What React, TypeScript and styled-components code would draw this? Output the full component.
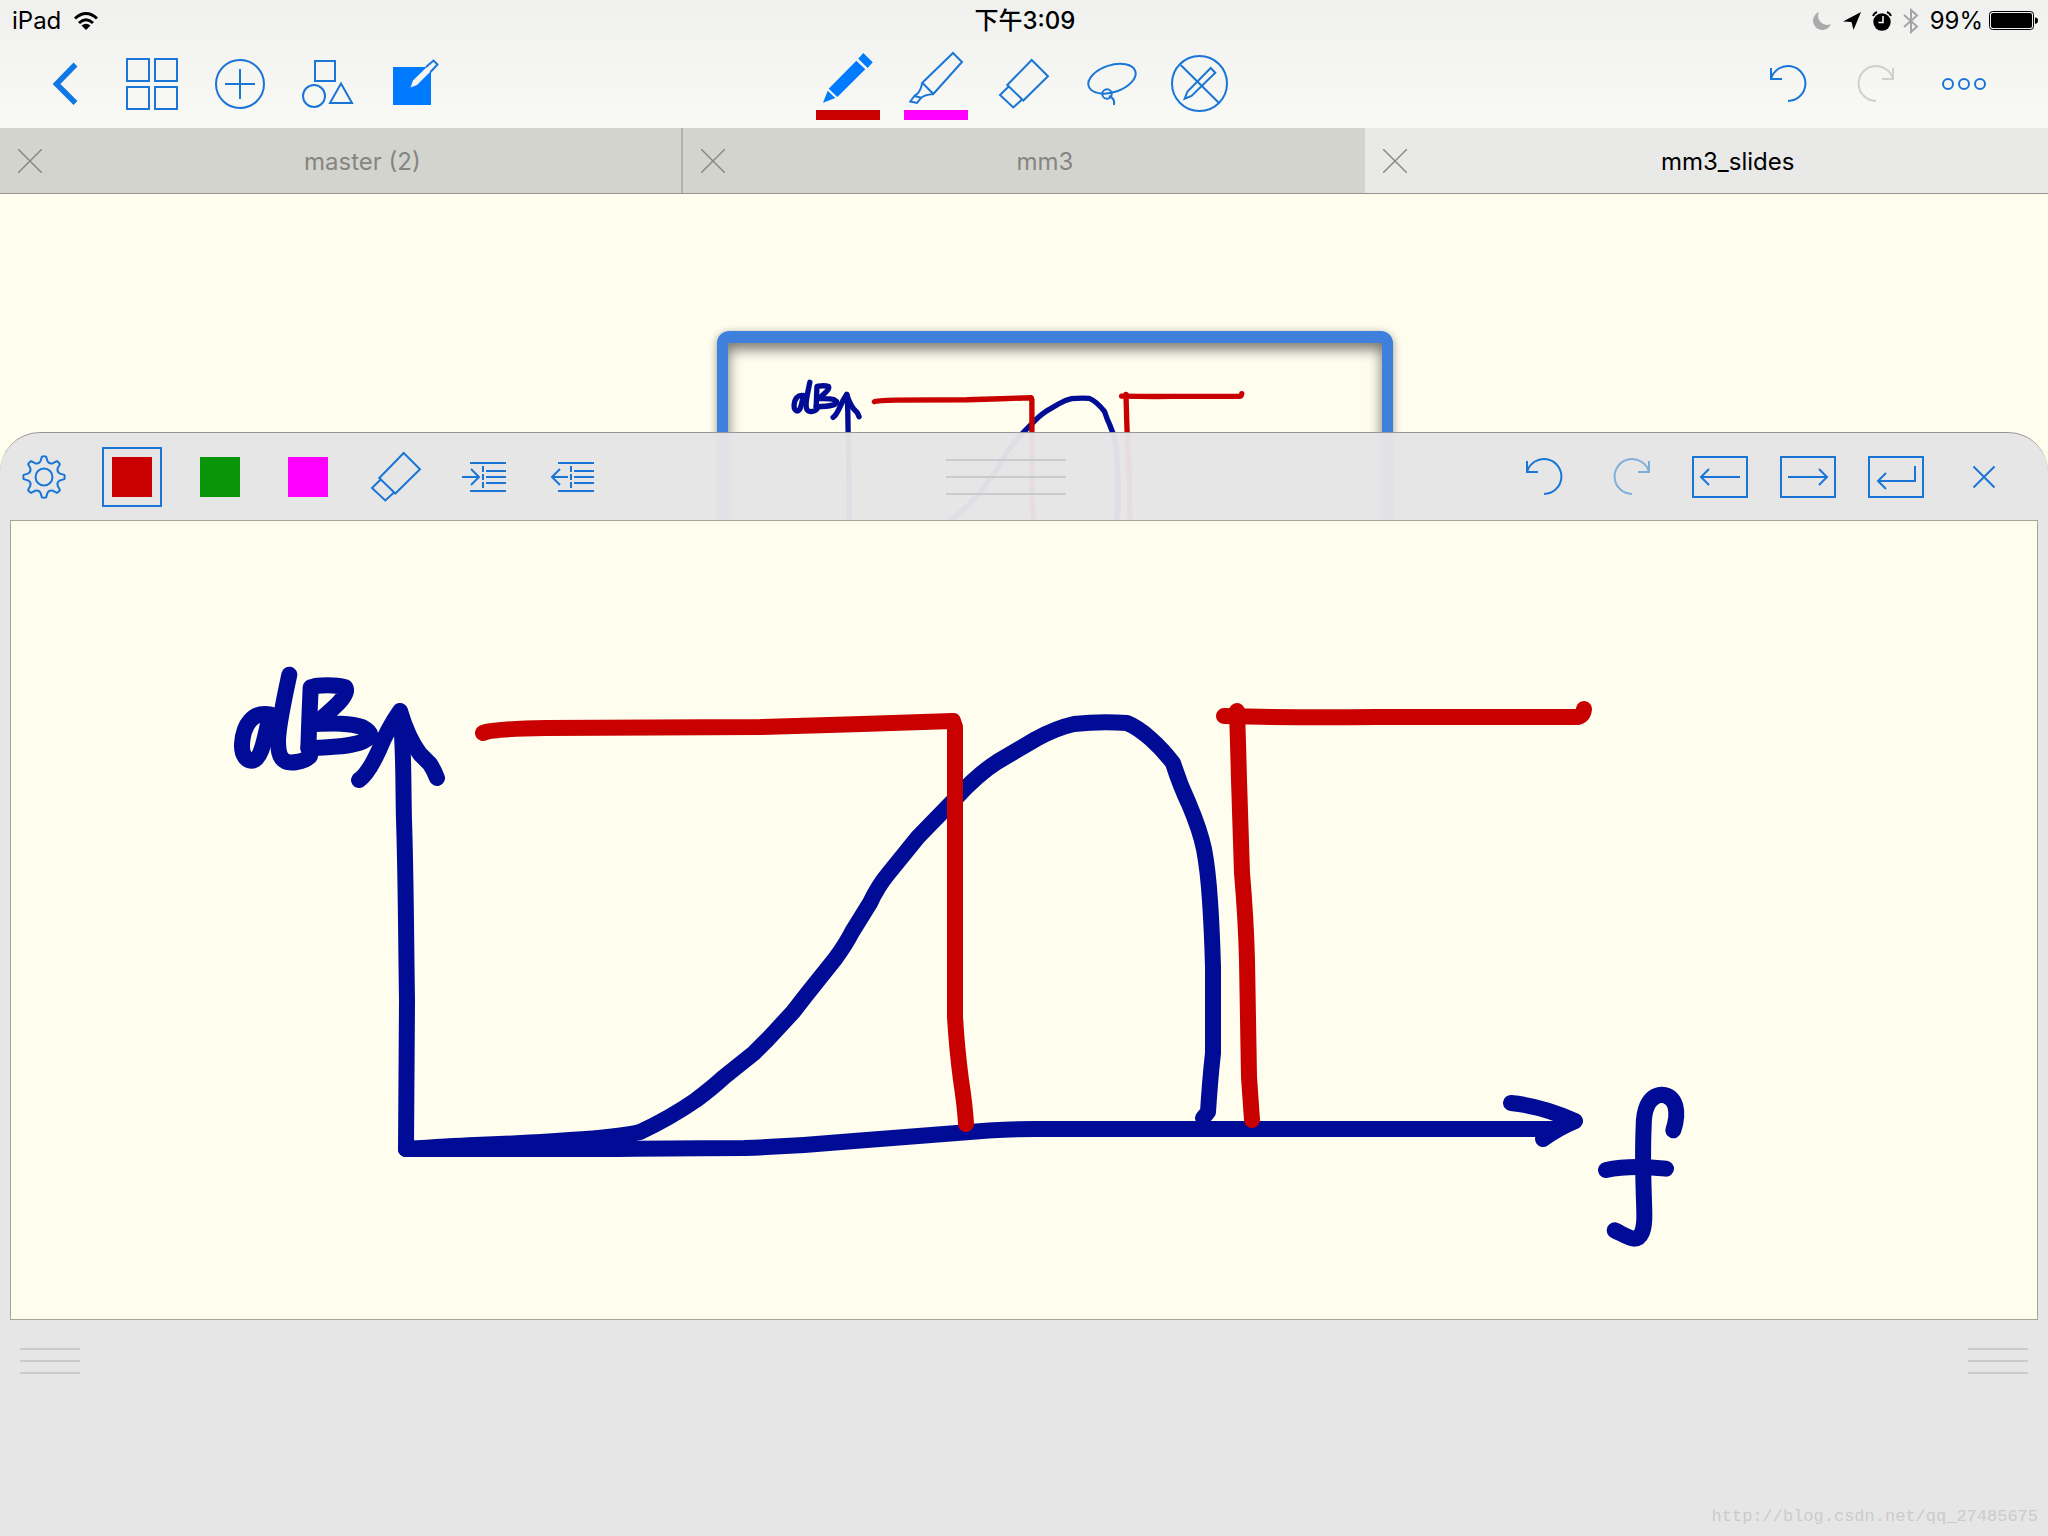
import React from 'react';
import styled, { createGlobalStyle } from 'styled-components';

const BLUE = '#1a76d6';
const SOLID_BLUE = '#007aff';
const RED = '#c80000';
const GREEN = '#089608';
const MAGENTA = '#ff00ff';
const INK = '#000c96';
const PAPER = '#fffdee';

const GlobalStyle = createGlobalStyle`
  * { box-sizing: border-box; }
  body {
    margin: 0;
    background: ${PAPER};
    font-family: Inter, "Liberation Sans", "Noto Sans CJK SC", sans-serif;
    font-size: 24px;
    line-height: 32px;
    color: #000;
  }
`;

const Page = styled.div`
  display: flex;
  flex-direction: column;
  min-height: 100vh;
  overflow: hidden;
`;

const TopBar = styled.header`
  background: linear-gradient(#f0f0ef, #f9f9f5);
`;

const StatusBar = styled.div`
  display: grid;
  grid-template-columns: 1fr auto 1fr;
  align-items: center;
  height: 40px;
  padding: 2px 10px 0 12px;
`;

const StatusGroup = styled.div<{ $end?: boolean }>`
  display: flex;
  align-items: center;
  justify-content: ${p => (p.$end ? 'flex-end' : 'flex-start')};
  gap: ${p => (p.$end ? 11 : 12)}px;
`;

const Battery = styled.span`
  display: flex;
  align-items: center;
  gap: 6px;
`;

const Clock = styled.time`
  font-weight: 500;
`;

const Toolbar = styled.div`
  display: grid;
  grid-template-columns: 1fr auto 1fr;
  height: 88px;
`;

const ToolGroup = styled.div<{ $end?: boolean; $left?: number; $right?: number }>`
  display: flex;
  justify-content: ${p => (p.$end ? 'flex-end' : 'flex-start')};
  padding-left: ${p => p.$left ?? 0}px;
  padding-right: ${p => p.$right ?? 0}px;
`;

const ToolButton = styled.button`
  position: relative;
  display: flex;
  align-items: center;
  justify-content: center;
  flex: none;
  width: 88px;
  height: 88px;
  padding: 0;
  border: 0;
  background: none;
  color: ${BLUE};
  cursor: pointer;
`;

const ColorBar = styled.span<{ $color: string }>`
  position: absolute;
  left: 12px;
  right: 12px;
  bottom: 8px;
  height: 10px;
  background: ${p => p.$color};
`;

const TabStrip = styled.div`
  display: flex;
  height: 66px;
  border-bottom: 1px solid #96968f;
`;

const Tab = styled.div<{ $active?: boolean; $divider?: boolean }>`
  display: flex;
  align-items: center;
  flex: 1;
  padding-left: 18px;
  background: ${p => (p.$active ? '#e9e9e8' : '#d4d4cf')};
  box-shadow: ${p => (p.$divider ? 'inset -2px 0 #b2b2ae' : 'none')};
`;

const CloseButton = styled.button`
  display: flex;
  width: 24px;
  height: 24px;
  padding: 0;
  border: 0;
  background: none;
  color: #858582;
  cursor: pointer;
`;

const TabTitle = styled.button<{ $active?: boolean }>`
  flex: 1;
  height: 100%;
  padding: 2px 0 0;
  border: 0;
  background: none;
  font: inherit;
  text-align: center;
  color: ${p => (p.$active ? '#000' : '#858582')};
  cursor: pointer;
`;

const Workspace = styled.main`
  position: relative;
  display: flex;
  flex: 1;
  flex-direction: column;
  background: ${PAPER};
`;

/* The zoom frame marks the part of the page that the panel below enlarges. */
const ZoomFrame = styled.div`
  position: absolute;
  top: 137px;
  left: 35%;
  width: 33%;

  &::after {
    content: '';
    position: absolute;
    inset: 0;
    border: solid #3f80dc;
    border-width: 12px 11px;
    border-radius: 12px;
    box-shadow: 0 2px 8px rgba(0, 0, 0, 0.4), inset 0 6px 14px rgba(0, 0, 0, 0.55);
  }
`;

const InkSvg = styled.svg`
  display: block;
  width: 100%;
  height: auto;
`;

const ZoomPanel = styled.section`
  position: relative;
  display: flex;
  flex: 1;
  flex-direction: column;
  margin-top: 238px;
  border-top: 1px solid #96969a;
  border-radius: 40px 40px 0 0;
  background: rgba(229, 229, 230, 0.97);
`;

const PanelHeader = styled.div`
  display: grid;
  grid-template-columns: 1fr auto 1fr;
  align-items: center;
  height: 87px;
  padding-bottom: 1px;
`;

const Swatch = styled.span<{ $color: string; $selected?: boolean }>`
  width: 60px;
  height: 60px;
  padding: 8px;
  border: 2px solid ${p => (p.$selected ? BLUE : 'transparent')};
  background: ${p => p.$color} content-box;
`;

const Grip = styled.button<{ $large?: boolean }>`
  display: flex;
  flex-direction: column;
  gap: ${p => (p.$large ? 15 : 10)}px;
  width: ${p => (p.$large ? 120 : 60)}px;
  margin-right: ${p => (p.$large ? 36 : 0)}px;
  padding: 0;
  border: 0;
  background: none;
  cursor: grab;
`;

const GripLine = styled.span`
  width: 100%;
  height: 2px;
  background: #cbcbcc;
`;

const WritingArea = styled.div`
  margin: 0 10px;
  border: 1px solid #a5a59f;
  background: ${PAPER};
`;

const PanelFooter = styled.footer`
  display: flex;
  flex: 1;
  flex-direction: column;
  justify-content: space-between;
  padding-top: 28px;
`;

const GripRow = styled.div`
  display: flex;
  justify-content: space-between;
  padding: 0 20px;
`;

const Watermark = styled.p`
  margin: 0;
  padding: 0 10px 3px;
  font-family: "Liberation Mono", monospace;
  font-size: 17px;
  line-height: 32px;
  text-align: right;
  color: #cbcbcb;
`;

type IconProps = { children: React.ReactNode; color?: string };

const Icon = ({ children, color = 'currentColor' }: IconProps) => (
  <svg width="88" height="88" viewBox="0 0 88 88" fill="none" stroke={color} strokeWidth="2" aria-hidden="true">
    {children}
  </svg>
);

const Cross = () => (
  <svg width="24" height="24" viewBox="0 0 24 24" stroke="currentColor" strokeWidth="1.4" aria-hidden="true">
    <path d="M0 0 24 24M24 0 0 24" />
  </svg>
);

const EraserIcon = () => (
  <Icon>
    <path d="M51.7 20 68 36.3 43.3 60.5 27.3 45Z" />
    <path d="M28.7 46.5 20 55 33.3 67.5 42 59.5" />
  </Icon>
);

const UndoIcon = () => (
  <Icon>
    <path d="M27 39A17.5 17.5 0 1 1 44 61M27 28V39H38" />
  </Icon>
);

const RedoIcon = ({ color }: { color: string }) => (
  <Icon color={color}>
    <path d="M61 39A17.5 17.5 0 1 0 44 61M61 28V39H50" />
  </Icon>
);

const polar = (radius: number, degrees: number) => {
  const a = (degrees * Math.PI) / 180;
  return `${(44 + radius * Math.sin(a)).toFixed(1)} ${(44 - radius * Math.cos(a)).toFixed(1)}`;
};

const gearPath =
  Array.from({ length: 8 }, (_, i) => {
    const a = i * 45;
    return `${i ? 'L' : 'M'}${polar(16.5, a - 12)}L${polar(20.5, a - 6)}Q${polar(21, a)} ${polar(20.5, a + 6)}L${polar(16.5, a + 12)}Q${polar(13.5, a + 22.5)} ${polar(16.5, a + 33)}`;
  }).join('') + 'Z';

const GearIcon = () => (
  <Icon>
    <path d={gearPath} strokeLinejoin="round" />
    <circle cx="44" cy="44" r="8.5" />
  </Icon>
);

const IndentIcon = ({ out }: { out?: boolean }) => (
  <Icon>
    <path d="M30 30H66M46 38H66M46 44H66M46 50H66M30 58H66M43 33V39M43 41V47M43 49V55" />
    <path d={out ? 'M40 44H24M32 36 24 44 32 52' : 'M22 44H39M31 36 39 44 31 52'} />
  </Icon>
);

const BoxedIcon = ({ d }: { d: string }) => (
  <Icon>
    <rect x="17" y="24" width="54" height="40" />
    <path d={d} />
  </Icon>
);

/* Pen strokes of the note, in page coordinates. */
const Strokes = ({ label }: { label: string }) => (
  <InkSvg viewBox="0 0 2026 798" role="img" aria-label={label}>
    <g transform="translate(-11 -521)" fill="none" strokeWidth="16" strokeLinecap="round" strokeLinejoin="round">
      <g stroke={INK}>
        <path d="M400 712C404 740 403 780 404 820C406 880 406 940 407 1000L406 1149" />
        <path d="M359 780Q368 774 379 750Q388 728 400 711Q408 738 420 754L430 764Q434 770 437 778" />
        <path d="M406 1149H617Q690 1148 744 1148Q800 1146 854 1141L957 1133Q1000 1129 1036 1129H1487L1558 1129" />
        <path d="M1511 1103Q1542 1106 1575 1121Q1558 1128 1543 1139" />
        <path d="M406 1149Q450 1146 475 1145Q530 1143 570 1140Q620 1137 640 1132Q670 1118 696 1100Q712 1088 724 1077L754 1053L767 1040L793 1012L807 994L835 959Q846 944 852 932L870 903Q878 886 888 874L918 837L955 799Q978 774 997 762L1036 739Q1056 728 1074 724Q1100 721 1127 723C1142 729 1160 746 1173 763Q1180 785 1189 804Q1200 830 1204 849Q1208 870 1210 901Q1212 930 1213 967V1053Q1210 1080 1208 1112L1203 1118" />
        <g transform="translate(200 640) scale(.33333)" strokeWidth="48">
          <path d="M212 224C160 212 130 252 126 312C124 348 142 364 158 362C190 355 196 270 212 224" />
          <path d="M268 104C248 200 236 250 234 300C234 350 245 374 290 366Q318 362 330 348" />
          <path d="M332 142Q328 230 325 324" />
          <path d="M345 138C380 134 420 136 436 142C448 164 410 198 345 252C400 250 450 248 488 262C515 276 520 290 490 304C450 322 390 320 325 325" />
        </g>
        <g transform="translate(1480 1060) scale(.33333)" strokeWidth="48">
          <path d="M580 211C598 156 590 108 545 104C502 108 491 156 491 200C486 310 492 400 493 460C494 510 484 536 462 536C444 534 424 520 404 511" />
          <path d="M378 330Q450 314 558 326" />
        </g>
      </g>
      <g stroke={RED}>
        <path d="M483 733Q490 729 546 728L760 727L862 724L953 721L955 727V1017Q957 1050 961 1080Q965 1106 966 1124" />
        <path d="M1224 716Q1300 718 1376 717H1574Q1583 718 1584 709" />
        <path d="M1237 711Q1238 740 1239 780L1242 873Q1246 920 1247 960L1249 1077L1252 1120" />
      </g>
    </g>
  </InkSvg>
);

const GripLines = () => (
  <>
    <GripLine />
    <GripLine />
    <GripLine />
  </>
);

const tabs = ['master (2)', 'mm3', 'mm3_slides'];

export default function App() {
  const active = 'mm3_slides';
  return (
    <Page>
      <GlobalStyle />
      <TopBar>
        <StatusBar>
          <StatusGroup>
            <span>iPad</span>
            <svg width="26" height="20" viewBox="0 0 26 20" fill="none" stroke="#000" strokeWidth="3" aria-label="Wi-Fi">
              <path d="M2 7.5Q13-2.5 24 7.5M6 12Q13 5.500 20 12" />
              <path d="M8.500 14.500Q13 11 17.500 14.500L13 19Z" fill="#000" stroke="none" />
            </svg>
          </StatusGroup>
          <Clock>下午3:09</Clock>
          <StatusGroup $end>
            <svg width="20" height="20" viewBox="0 0 20 20" fill="#aaa" aria-label="Do not disturb">
              <path d="M7 1A9.300 9.300 0 1 0 19 13A9 9 0 0 1 7 1Z" />
            </svg>
            <svg width="18" height="18" viewBox="0 0 18 18" aria-label="Location">
              <path d="M18 0 0 9.500 8.500 10 10.500 18Z" />
            </svg>
            <svg width="20" height="20" viewBox="0 0 20 20" fill="none" aria-label="Alarm">
              <circle cx="10" cy="11" r="8.700" fill="#000" />
              <path d="M1 5Q2 2 5 1M15 1Q18 2 19 5" stroke="#000" strokeWidth="2" />
              <path d="M11 5V11.500H6.500" stroke="#fff" strokeWidth="1.500" />
            </svg>
            <svg width="16" height="26" viewBox="0 0 16 26" fill="none" stroke="#a5a5a5" strokeWidth="2" aria-label="Bluetooth">
              <path d="M1 7 14 18.500 8 24V2L14 7.500 1 19" />
            </svg>
            <Battery>
              <span>99%</span>
              <svg width="49" height="20" viewBox="0 0 49 20" aria-label="Battery">
                <rect x=".5" y=".5" width="44" height="18" rx="3" fill="none" stroke="#000" />
                <rect x="2" y="2" width="41" height="15" rx="2" />
                <path d="M46 6.500Q49 6.500 49 9.500T46 13Z" />
              </svg>
            </Battery>
          </StatusGroup>
        </StatusBar>
        <Toolbar>
          <ToolGroup $left={20}>
            <ToolButton aria-label="Back">
              <Icon color="#0f78e6">
                <path d="M55.500 24.500 36.500 44 55.500 63" strokeWidth="5.500" />
              </Icon>
            </ToolButton>
            <ToolButton aria-label="Pages">
              <Icon>
                <path d="M19 19H41V41H19ZM47 19H69V41H47ZM19 47H41V69H19ZM47 47H69V69H47Z" />
              </Icon>
            </ToolButton>
            <ToolButton aria-label="Add">
              <Icon>
                <circle cx="44" cy="44" r="24" />
                <path d="M29 44H59M44 29V59" />
              </Icon>
            </ToolButton>
            <ToolButton aria-label="Shapes">
              <Icon>
                <rect x="31" y="21" width="20" height="20" />
                <circle cx="30" cy="56" r="11" />
                <path d="M57 43.500 68 63H46Z" />
              </Icon>
            </ToolButton>
            <ToolButton aria-label="Zoom window">
              <Icon>
                <rect x="21" y="27" width="38" height="38" fill={SOLID_BLUE} stroke="none" />
                <path d="M38.500 47.500 41 40.500 61.500 20.500 65.500 24.500 45 45Z" fill="#f4f4f2" stroke="none" />
                <path d="M54 27 61.500 20.500 65.500 24.500 58.500 32" />
              </Icon>
            </ToolButton>
          </ToolGroup>
          <ToolGroup>
            <ToolButton aria-label="Pen">
              <Icon>
                <path
                  d="M52.300 20.700 61.300 29.300 33.300 57 24.700 48.700ZM59.300 13 68.700 22.300 63.700 28 54.300 18.700ZM23.700 50.700 31.300 58 19 62.700Z"
                  fill={SOLID_BLUE}
                  stroke="none"
                />
              </Icon>
              <ColorBar $color={RED} />
            </ToolButton>
            <ToolButton aria-label="Highlighter">
              <Icon>
                <path d="M61 13 70 22 41.300 54 30.300 42.700Z" />
                <path d="M30.300 42.700Q28.500 53 22.300 56L18.300 61.500 25 63 29.300 57.700Q32 55 41.300 54M22.300 56 29.300 57.700" />
              </Icon>
              <ColorBar $color={MAGENTA} />
            </ToolButton>
            <ToolButton aria-label="Eraser">
              <EraserIcon />
            </ToolButton>
            <ToolButton aria-label="Lasso">
              <Icon>
                <ellipse cx="44" cy="38.700" rx="24.500" ry="13.500" transform="rotate(-18 44 38.700)" />
                <circle cx="39" cy="54" r="4.700" />
                <path d="M41 56Q47 58 46 65" />
              </Icon>
            </ToolButton>
            <ToolButton aria-label="Read only">
              <Icon>
                <circle cx="43.500" cy="43.500" r="27.500" />
                <path d="M24.700 25 62.500 62.500M28.700 58.700 31.500 51.500 54.700 28 59.300 32.700 35.500 56Z" />
              </Icon>
            </ToolButton>
          </ToolGroup>
          <ToolGroup $end $right={40}>
            <ToolButton aria-label="Undo">
              <UndoIcon />
            </ToolButton>
            <ToolButton aria-label="Redo">
              <RedoIcon color="#cfcfce" />
            </ToolButton>
            <ToolButton aria-label="More">
              <Icon>
                <circle cx="28" cy="44" r="5" />
                <circle cx="44" cy="44" r="5" />
                <circle cx="60" cy="44" r="5" />
              </Icon>
            </ToolButton>
          </ToolGroup>
        </Toolbar>
      </TopBar>
      <TabStrip>
        {tabs.map((name, i) => (
          <Tab key={name} $active={name === active} $divider={i < tabs.length - 1 && tabs[i + 1] !== active}>
            <CloseButton aria-label={`Close ${name}`}>
              <Cross />
            </CloseButton>
            <TabTitle $active={name === active}>{name}</TabTitle>
          </Tab>
        ))}
      </TabStrip>
      <Workspace>
        <ZoomFrame>
          <Strokes label="Page preview" />
        </ZoomFrame>
        <ZoomPanel>
          <PanelHeader>
            <ToolGroup>
              <ToolButton aria-label="Settings">
                <GearIcon />
              </ToolButton>
              <ToolButton aria-label="Red ink">
                <Swatch $color={RED} $selected />
              </ToolButton>
              <ToolButton aria-label="Green ink">
                <Swatch $color={GREEN} />
              </ToolButton>
              <ToolButton aria-label="Magenta ink">
                <Swatch $color={MAGENTA} />
              </ToolButton>
              <ToolButton aria-label="Eraser">
                <EraserIcon />
              </ToolButton>
              <ToolButton aria-label="Indent">
                <IndentIcon />
              </ToolButton>
              <ToolButton aria-label="Outdent">
                <IndentIcon out />
              </ToolButton>
            </ToolGroup>
            <Grip $large aria-label="Move panel">
              <GripLines />
            </Grip>
            <ToolGroup $end $right={20}>
              <ToolButton aria-label="Undo">
                <UndoIcon />
              </ToolButton>
              <ToolButton aria-label="Redo">
                <RedoIcon color="#82aedb" />
              </ToolButton>
              <ToolButton aria-label="Move left">
                <BoxedIcon d="M64 44H25M33 36 25 44 33 52" />
              </ToolButton>
              <ToolButton aria-label="Move right">
                <BoxedIcon d="M24 44H63M55 36 63 44 55 52" />
              </ToolButton>
              <ToolButton aria-label="New line">
                <BoxedIcon d="M63 33V48H26M34 40 26 48 34 56" />
              </ToolButton>
              <ToolButton aria-label="Close panel">
                <Icon>
                  <path d="M33.500 33.500 54.500 54.500M54.500 33.500 33.500 54.500" />
                </Icon>
              </ToolButton>
            </ToolGroup>
          </PanelHeader>
          <WritingArea>
            <Strokes label="Handwritten plot of dB against f" />
          </WritingArea>
          <PanelFooter>
            <GripRow>
              <Grip aria-label="Resize left">
                <GripLines />
              </Grip>
              <Grip aria-label="Resize right">
                <GripLines />
              </Grip>
            </GripRow>
            <Watermark>http://blog.csdn.net/qq_27485675</Watermark>
          </PanelFooter>
        </ZoomPanel>
      </Workspace>
    </Page>
  );
}
